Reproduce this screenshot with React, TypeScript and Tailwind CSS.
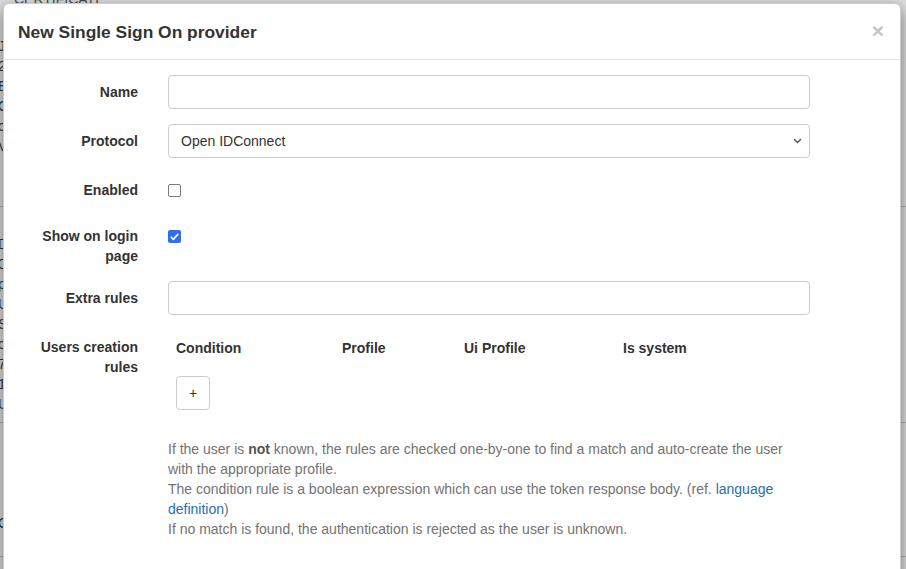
import React from "react";

const font = { fontFamily: '"Liberation Sans", Arial, Helvetica, sans-serif' };

function Label({ children, className = "" }: { children: React.ReactNode; className?: string }) {
  return (
    <div className={`w-[120px] shrink-0 text-right text-[14px] font-bold leading-[20px] text-[#333] pt-[7px] ${className}`}>
      {children}
    </div>
  );
}

export default function App() {
  const bgRows = ["J", "2", "E", "C", "c", "V", "", "D", "0", "p", "U", "S", "c", "7", "1", "U"];
  return (
    <div className="relative w-[906px] h-[569px] overflow-hidden bg-white" style={font}>
      {/* background page */}
      <div className="absolute inset-0 text-[14px] text-[#444]">
        <div className="absolute left-[14px] top-[-11px] text-[14px] text-[#555]">CERTIFICATE</div>
        <div className="absolute left-[-2px] top-[36px] flex flex-col">
          {bgRows.slice(0, 7).map((r, i) => (
            <div key={i} className="h-[20px] leading-[20px] text-[#444]">{r}</div>
          ))}
        </div>
        <div className="absolute left-0 right-0 top-[206px] border-t border-[#ccc]" />
        <div className="absolute left-[-2px] top-[234px] flex flex-col">
          {bgRows.slice(7).map((r, i) => (
            <div key={i} className="h-[20px] leading-[20px] text-[#444]">{r}</div>
          ))}
        </div>
        <div className="absolute left-0 right-0 top-[422px] border-t border-[#ccc]" />
        <div className="absolute left-[-2px] top-[513px] leading-[20px] text-[#444]">C</div>
        <div className="absolute left-0 right-0 top-[556px] border-t border-[#ccc]" />
      </div>
      <div className="absolute inset-0 bg-black/[0.13]" />

      {/* modal */}
      <div className="absolute left-[3px] top-[3px] w-[898px] h-[600px] bg-white rounded-[6px] border border-black/20 shadow-[0_5px_15px_rgba(0,0,0,0.5)]">
        <div className="flex items-center justify-between h-[56px] px-[14px] border-b border-[#e5e5e5]">
          <h4 className="text-[17.4px] font-bold text-[#333] leading-[26px]">New Single Sign On provider</h4>
          <span className="text-[21px] font-bold text-[#c4c4c4] leading-none mr-[2px] mt-[-2px]">×</span>
        </div>

        <div className="pt-[15px] flex flex-col">
          {/* Name */}
          <div className="flex gap-[30px] ml-[14px] h-[34px] mb-[15px]">
            <Label>Name</Label>
            <div className="w-[642px] h-[34px] border border-[#ccc] rounded-[4px] bg-white" />
          </div>
          {/* Protocol */}
          <div className="flex gap-[30px] ml-[14px] h-[34px] mb-[15px]">
            <Label>Protocol</Label>
            <div className="w-[642px] h-[34px] border border-[#ccc] rounded-[4px] bg-white flex items-center justify-between pl-[12px] pr-[7px] text-[14px] text-[#333]">
              <span>Open IDConnect</span>
              <svg width="9" height="6" viewBox="0 0 9 6" fill="none" stroke="#555" strokeWidth="1.4">
                <path d="M1 1l3.5 3.5L8 1" />
              </svg>
            </div>
          </div>
          {/* Enabled */}
          <div className="flex gap-[30px] ml-[14px] h-[31px] mb-[15px]">
            <Label>Enabled</Label>
            <div className="pt-[11px]">
              <span className="block w-[13px] h-[13px] border-[1.5px] border-[#7a7a80] rounded-[2px] bg-white" />
            </div>
          </div>
          {/* Show on login page */}
          <div className="flex gap-[30px] ml-[14px] h-[47px] mb-[15px]">
            <Label>Show on login page</Label>
            <div className="pt-[11px]">
              <span className="flex items-center justify-center w-[13px] h-[13px] rounded-[2px] bg-[#2f6fec]">
                <svg width="9" height="8" viewBox="0 0 9 8" fill="none" stroke="#fff" strokeWidth="1.6" strokeLinecap="round" strokeLinejoin="round">
                  <path d="M1.2 4.2l2.2 2.2L7.8 1.4" />
                </svg>
              </span>
            </div>
          </div>
          {/* Extra rules */}
          <div className="flex gap-[30px] ml-[14px] h-[34px] mb-[15px]">
            <Label>Extra rules</Label>
            <div className="w-[642px] h-[34px] border border-[#ccc] rounded-[4px] bg-white" />
          </div>
          {/* Users creation rules */}
          <div className="flex gap-[30px] ml-[14px]">
            <Label>Users creation rules</Label>
            <div className="w-[642px] flex flex-col">
              <div className="flex text-[14px] font-bold text-[#333] leading-[20px] pt-[8px]">
                <div className="w-[166px] pl-[8px]">Condition</div>
                <div className="w-[122px] pl-[8px]">Profile</div>
                <div className="w-[159px] pl-[8px]">Ui Profile</div>
                <div className="pl-[8px]">Is system</div>
              </div>
              <div className="pl-[8px] pt-[18px]">
                <div className="w-[34px] h-[34px] border border-[#ccc] rounded-[4px] flex items-center justify-center text-[14px] text-[#333]">+</div>
              </div>
              <div className="pt-[29px] text-[14px] leading-[20px] text-[#737373]">
                If the user is <b className="text-[#555]">not</b> known, the rules are checked one-by-one to find a match and auto-create the user with the appropriate profile.
                <br />
                The condition rule is a boolean expression which can use the token response body. (ref. <span className="text-[#2a6db5]">language definition</span>)
                <br />
                If no match is found, the authentication is rejected as the user is unknown.
              </div>
            </div>
          </div>
        </div>
      </div>
    </div>
  );
}
